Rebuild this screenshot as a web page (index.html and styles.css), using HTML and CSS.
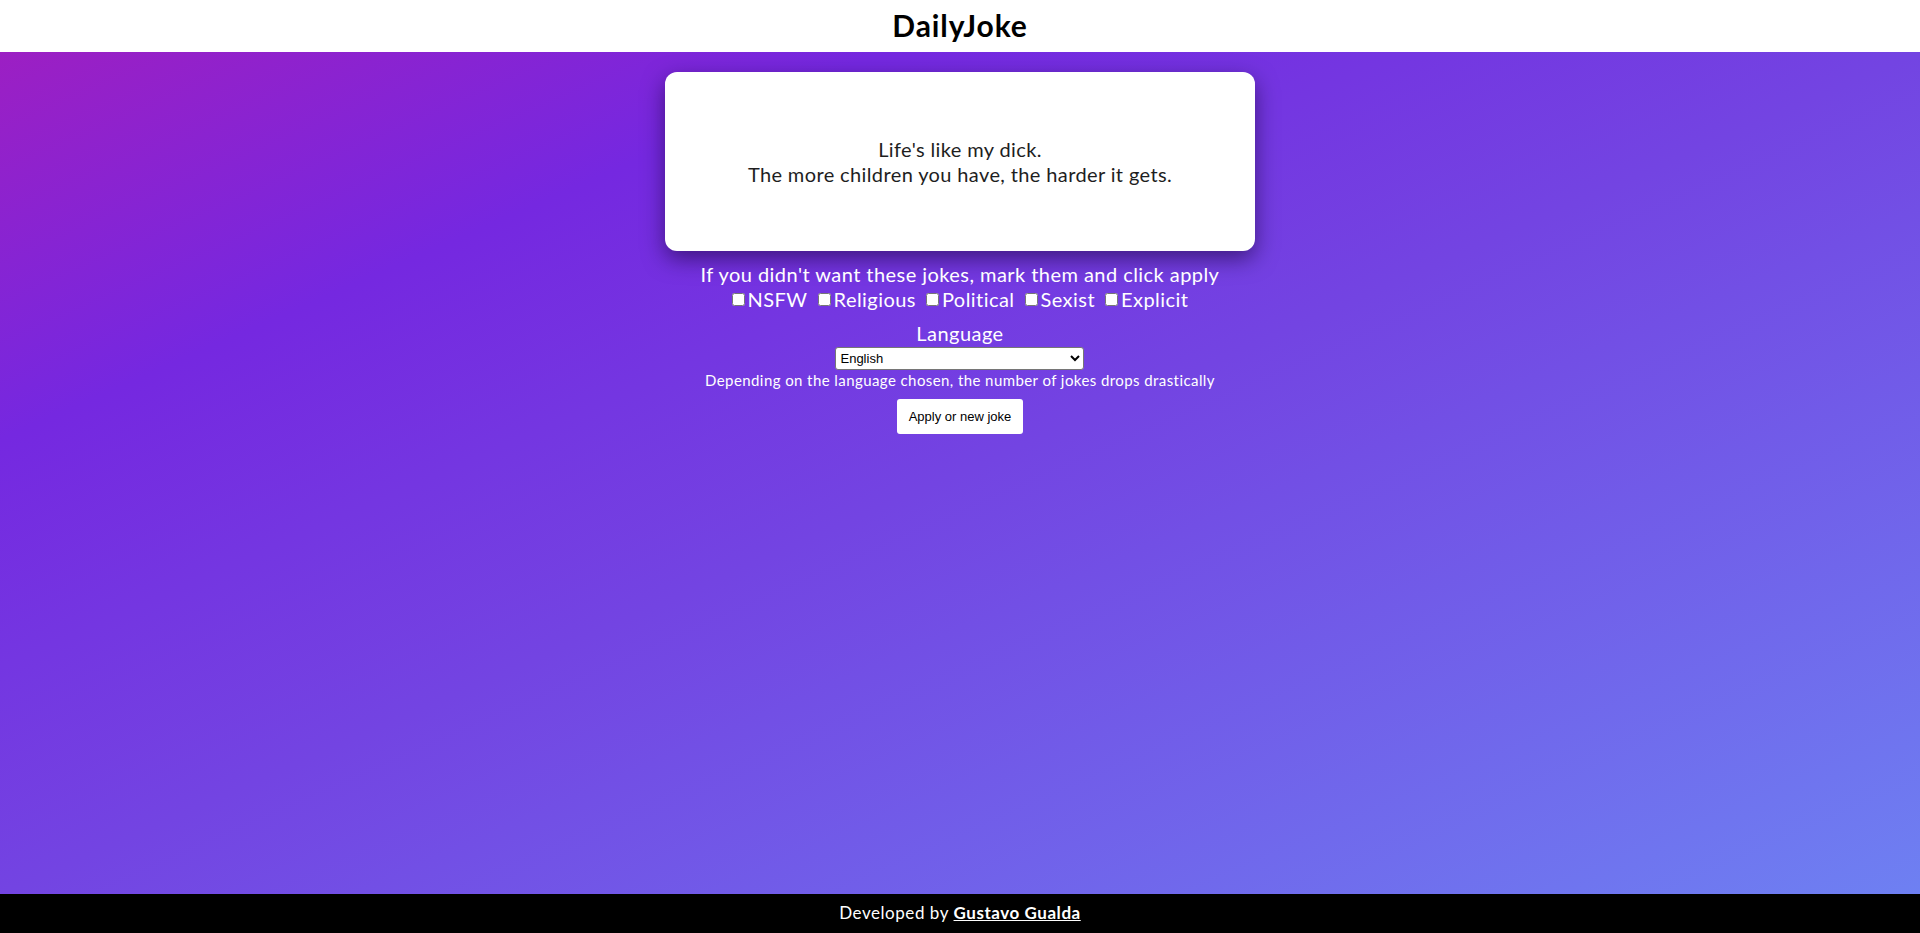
FILE: index.html
```html
<!DOCTYPE html>
<html lang="en">
<head>
<meta charset="utf-8">
<title>DailyJoke</title>
<link rel="stylesheet" href="styles.css">
</head>
<body>
<header class="topbar">
  <h1 class="brand">DailyJoke</h1>
</header>
<main class="stage">
  <section class="card">
    <p class="joke">Life's like my dick.<br>The more children you have, the harder it gets.</p>
  </section>
  <section class="filters">
    <p class="filters-title">If you didn't want these jokes, mark them and click apply</p>
    <div class="checks">
      <label class="check"><input type="checkbox">NSFW</label>
      <label class="check"><input type="checkbox">Religious</label>
      <label class="check"><input type="checkbox">Political</label>
      <label class="check"><input type="checkbox">Sexist</label>
      <label class="check"><input type="checkbox">Explicit</label>
    </div>
  </section>
  <section class="lang">
    <p class="lang-title">Language</p>
    <select class="lang-select">
      <option>English</option>
    </select>
    <p class="lang-note">Depending on the language chosen, the number of jokes drops drastically</p>
  </section>
  <button class="apply" type="button">Apply or new joke</button>
</main>
<footer class="foot">
  <span>Developed by <a class="author" href="#">Gustavo Gualda</a></span>
</footer>
</body>
</html>
```

FILE: styles.css
```css
* { box-sizing: border-box; }
html, body { height: 100%; }
body {
  margin: 0;
  display: flex;
  flex-direction: column;
  min-height: 100vh;
  font-family: "Lato", "Open Sans", sans-serif;
  color: #fff;
}
.topbar {
  height: 52px;
  background: #fff;
  display: flex;
  align-items: center;
  justify-content: center;
  padding-bottom: 3px;
}
.brand {
  margin: 0;
  font-size: 30px;
  font-weight: 700;
  color: #000;
  letter-spacing: 0.9px;
}
.stage {
  flex: 1;
  display: flex;
  flex-direction: column;
  align-items: center;
  padding-top: 20px;
  background: linear-gradient(to bottom right, #9c1fc3 0%, #7528e0 23%, #7344e2 50%, #6e80f2 100%);
}
.card {
  width: 590px;
  height: 179px;
  background: #fff;
  border-radius: 12px;
  box-shadow: 0 8px 22px rgba(20, 0, 50, 0.55);
  display: flex;
  align-items: center;
  justify-content: center;
}
.joke {
  margin: 0;
  text-align: center;
  font-size: 20px;
  line-height: 25px;
  color: #1e1e1e;
  letter-spacing: 0.38px;
}
.filters {
  margin-top: 11px;
  text-align: center;
}
.filters-title {
  margin: 0;
  font-size: 20px;
  line-height: 24px;
  letter-spacing: 0.45px;
}
.checks {
  display: flex;
  justify-content: center;
  gap: 10px;
  margin-top: 1px;
  font-size: 20px;
  line-height: 24px;
  letter-spacing: 0.45px;
}
.check {
  display: flex;
  align-items: center;
}
.check input {
  width: 13px;
  height: 13px;
  margin: 0 3px 0 0;
}
.lang {
  margin-top: 10px;
  display: flex;
  flex-direction: column;
  align-items: center;
}
.lang-title {
  margin: 0;
  font-size: 20px;
  line-height: 24px;
  letter-spacing: 0.45px;
}
.lang-select {
  margin-top: 2px;
  width: 249px;
  height: 23px;
  font-family: "Liberation Sans", Arial, sans-serif;
  font-size: 13px;
  color: #000;
  background: #fff;
  border: 1px solid #767676;
  border-radius: 3px;
}
.lang-note {
  margin: 1px 0 0;
  font-size: 15px;
  line-height: 18px;
  letter-spacing: 0.42px;
}
.apply {
  margin-top: 10px;
  width: 126px;
  height: 35px;
  background: #fff;
  border: none;
  border-radius: 3px;
  font-family: "Liberation Sans", Arial, sans-serif;
  font-size: 13px;
  color: #000;
  padding: 0;
}
.foot {
  height: 39px;
  background: #000;
  display: flex;
  align-items: center;
  justify-content: center;
  padding-bottom: 3px;
  font-size: 17px;
  letter-spacing: 0.55px;
}
.author {
  color: #fff;
  font-weight: 700;
  text-decoration: underline;
}
```
